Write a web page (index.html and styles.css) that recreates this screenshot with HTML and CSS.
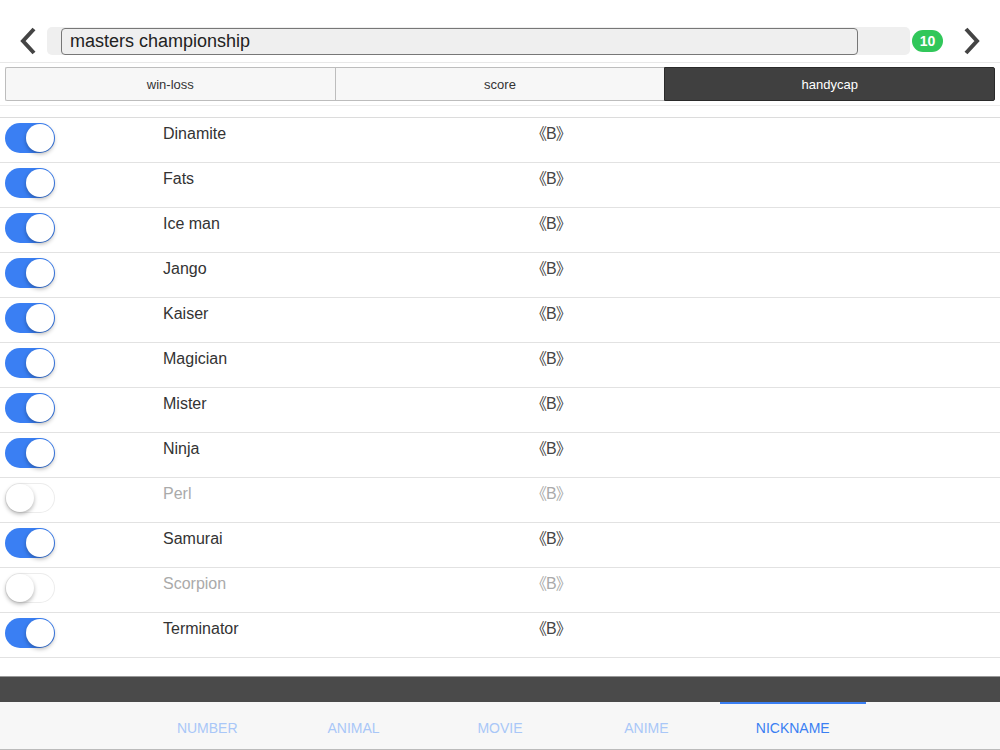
FILE: index.html
```html
<!DOCTYPE html>
<html>

<head>
  <title>Nickname</title>
  <link rel="stylesheet" href="styles.css">
</head>

<body>
  <div class="header">
    <button class="nav back" type="button">
      <svg width="20" height="28" viewBox="0 0 20 28"><path d="M16 2 L5 14 L16 26" fill="none" stroke="#444" stroke-width="4"/></svg>
    </button>
    <div class="search">
      <input type="text" class="search-input" value="masters championship">
    </div>
    <span class="badge">10</span>
    <button class="nav next" type="button">
      <svg width="20" height="28" viewBox="0 0 20 28"><path d="M4 2 L15 14 L4 26" fill="none" stroke="#444" stroke-width="4"/></svg>
    </button>
  </div>

  <div class="segments">
    <button type="button" class="segment">win-loss</button>
    <button type="button" class="segment">score</button>
    <button type="button" class="segment active">handycap</button>
  </div>

  <ul class="list" id="list"></ul>

  <div class="darkbar"></div>
  <div class="tabs">
    <span class="tab">NUMBER</span>
    <span class="tab">ANIMAL</span>
    <span class="tab">MOVIE</span>
    <span class="tab">ANIME</span>
    <span class="tab active">NICKNAME</span>
  </div>

  <script>
    let names = [
      ['Dinamite', true], ['Fats', true], ['Ice man', true], ['Jango', true],
      ['Kaiser', true], ['Magician', true], ['Mister', true], ['Ninja', true],
      ['Perl', false], ['Samurai', true], ['Scorpion', false], ['Terminator', true]
    ];
    let list = document.getElementById('list');

    names.forEach(function (item) {
      let li = document.createElement('li');
      li.className = item[1] ? 'row' : 'row off';
      li.innerHTML = '<span class="toggle"><span class="knob"></span></span>' +
        '<span class="name">' + item[0] + '</span>' +
        '<span class="grade">《B》</span>';
      li.querySelector('.toggle').onclick = function () {
        li.classList.toggle('off');
      };
      list.appendChild(li);
    });
  </script>
</body>

</html>
```

FILE: styles.css
```css
body {
  margin: 0;
  font-family: "Liberation Sans", Arial, "Noto Sans CJK JP", sans-serif;
  background-color: #fff;
  color: #333;
  width: 1000px;
  height: 750px;
  overflow: hidden;
}

.header {
  display: flex;
  align-items: center;
  height: 63px;
  padding-top: 20px;
  box-sizing: border-box;
  border-bottom: 1px solid #e8e8e8;
}

.nav {
  border: none;
  background: none;
  padding: 0;
  height: 28px;
  display: flex;
  align-items: center;
  cursor: pointer;
}

.nav.back {
  width: 47px;
  padding-left: 18px;
  box-sizing: border-box;
}

.nav.next {
  width: 57px;
  justify-content: center;
}

.search {
  width: 863px;
  height: 28px;
  background-color: #efefef;
  border-radius: 5px;
  padding-left: 14px;
  box-sizing: border-box;
  display: flex;
  align-items: center;
}

.search-input {
  width: 797px;
  height: 27px;
  box-sizing: border-box;
  border: 1px solid #777;
  border-radius: 4px;
  background-color: #efefef;
  font-family: inherit;
  font-size: 18px;
  color: #222;
  padding: 0 8px;
}

.badge {
  margin-left: 2px;
  width: 31px;
  height: 22px;
  border-radius: 11px;
  background-color: #31c75a;
  color: #fff;
  font-size: 14px;
  font-weight: bold;
  display: flex;
  justify-content: center;
  align-items: center;
}

.segments {
  display: flex;
  margin: 4px 5px 0;
  height: 34px;
}

.segment {
  flex: 1;
  border: 1px solid #bdbdbd;
  border-right: none;
  background-color: #f7f7f7;
  font-family: inherit;
  font-size: 13px;
  color: #333;
  padding: 0;
}

.segment:first-child {
  border-radius: 2px 0 0 2px;
}

.segment.active {
  background-color: #404040;
  border: 1px solid #2a2a2a;
  color: #fff;
  border-radius: 0 2px 2px 0;
}

.list {
  list-style: none;
  margin: 4px 0 0;
  padding: 0;
  border-top: 1px solid #ececec;
  padding-top: 11px;
}

.row {
  display: flex;
  align-items: flex-start;
  height: 44px;
  border-top: 1px solid #e2e2e2;
}

.row:first-child {
  border-top-color: #dcdcdc;
}

.row:last-child {
  border-bottom: 1px solid #e2e2e2;
}

.toggle {
  margin: 5px 0 0 5px;
  width: 50px;
  height: 30px;
  border-radius: 15px;
  background-color: #3a7ff3;
  position: relative;
  cursor: pointer;
  flex-shrink: 0;
}

.knob {
  position: absolute;
  top: 1px;
  right: 1px;
  width: 28px;
  height: 28px;
  border-radius: 50%;
  background-color: #fff;
  box-shadow: 0 2px 4px rgba(0, 0, 0, 0.3);
}

.name {
  margin-left: 108px;
  width: 368px;
  font-size: 16px;
  line-height: 16px;
  padding-top: 8px;
}

.grade {
  font-size: 16px;
  line-height: 16px;
  padding-top: 8px;
  color: #444;
  letter-spacing: -1px;
}

.row.off .toggle {
  background-color: #fff;
  box-shadow: inset 0 0 0 1px #ececec;
}

.row.off .knob {
  right: auto;
  left: 1px;
}

.row.off .name,
.row.off .grade {
  color: #aaa;
}

.darkbar {
  margin-top: 18px;
  height: 25px;
  background-color: #4a4a4a;
  border-top: 1px solid #999;
}

.tabs {
  height: 47px;
  background-color: #f7f7f7;
  border-bottom: 1px solid #bbb;
  display: flex;
  justify-content: center;
}

.tab {
  width: 146.4px;
  display: flex;
  justify-content: center;
  align-items: center;
  font-size: 14px;
  color: #a9c7f8;
  border-top: 2px solid transparent;
  padding-top: 3px;
}

.tab.active {
  color: #3a7ff3;
  border-top-color: #3a7ff3;
}
```
